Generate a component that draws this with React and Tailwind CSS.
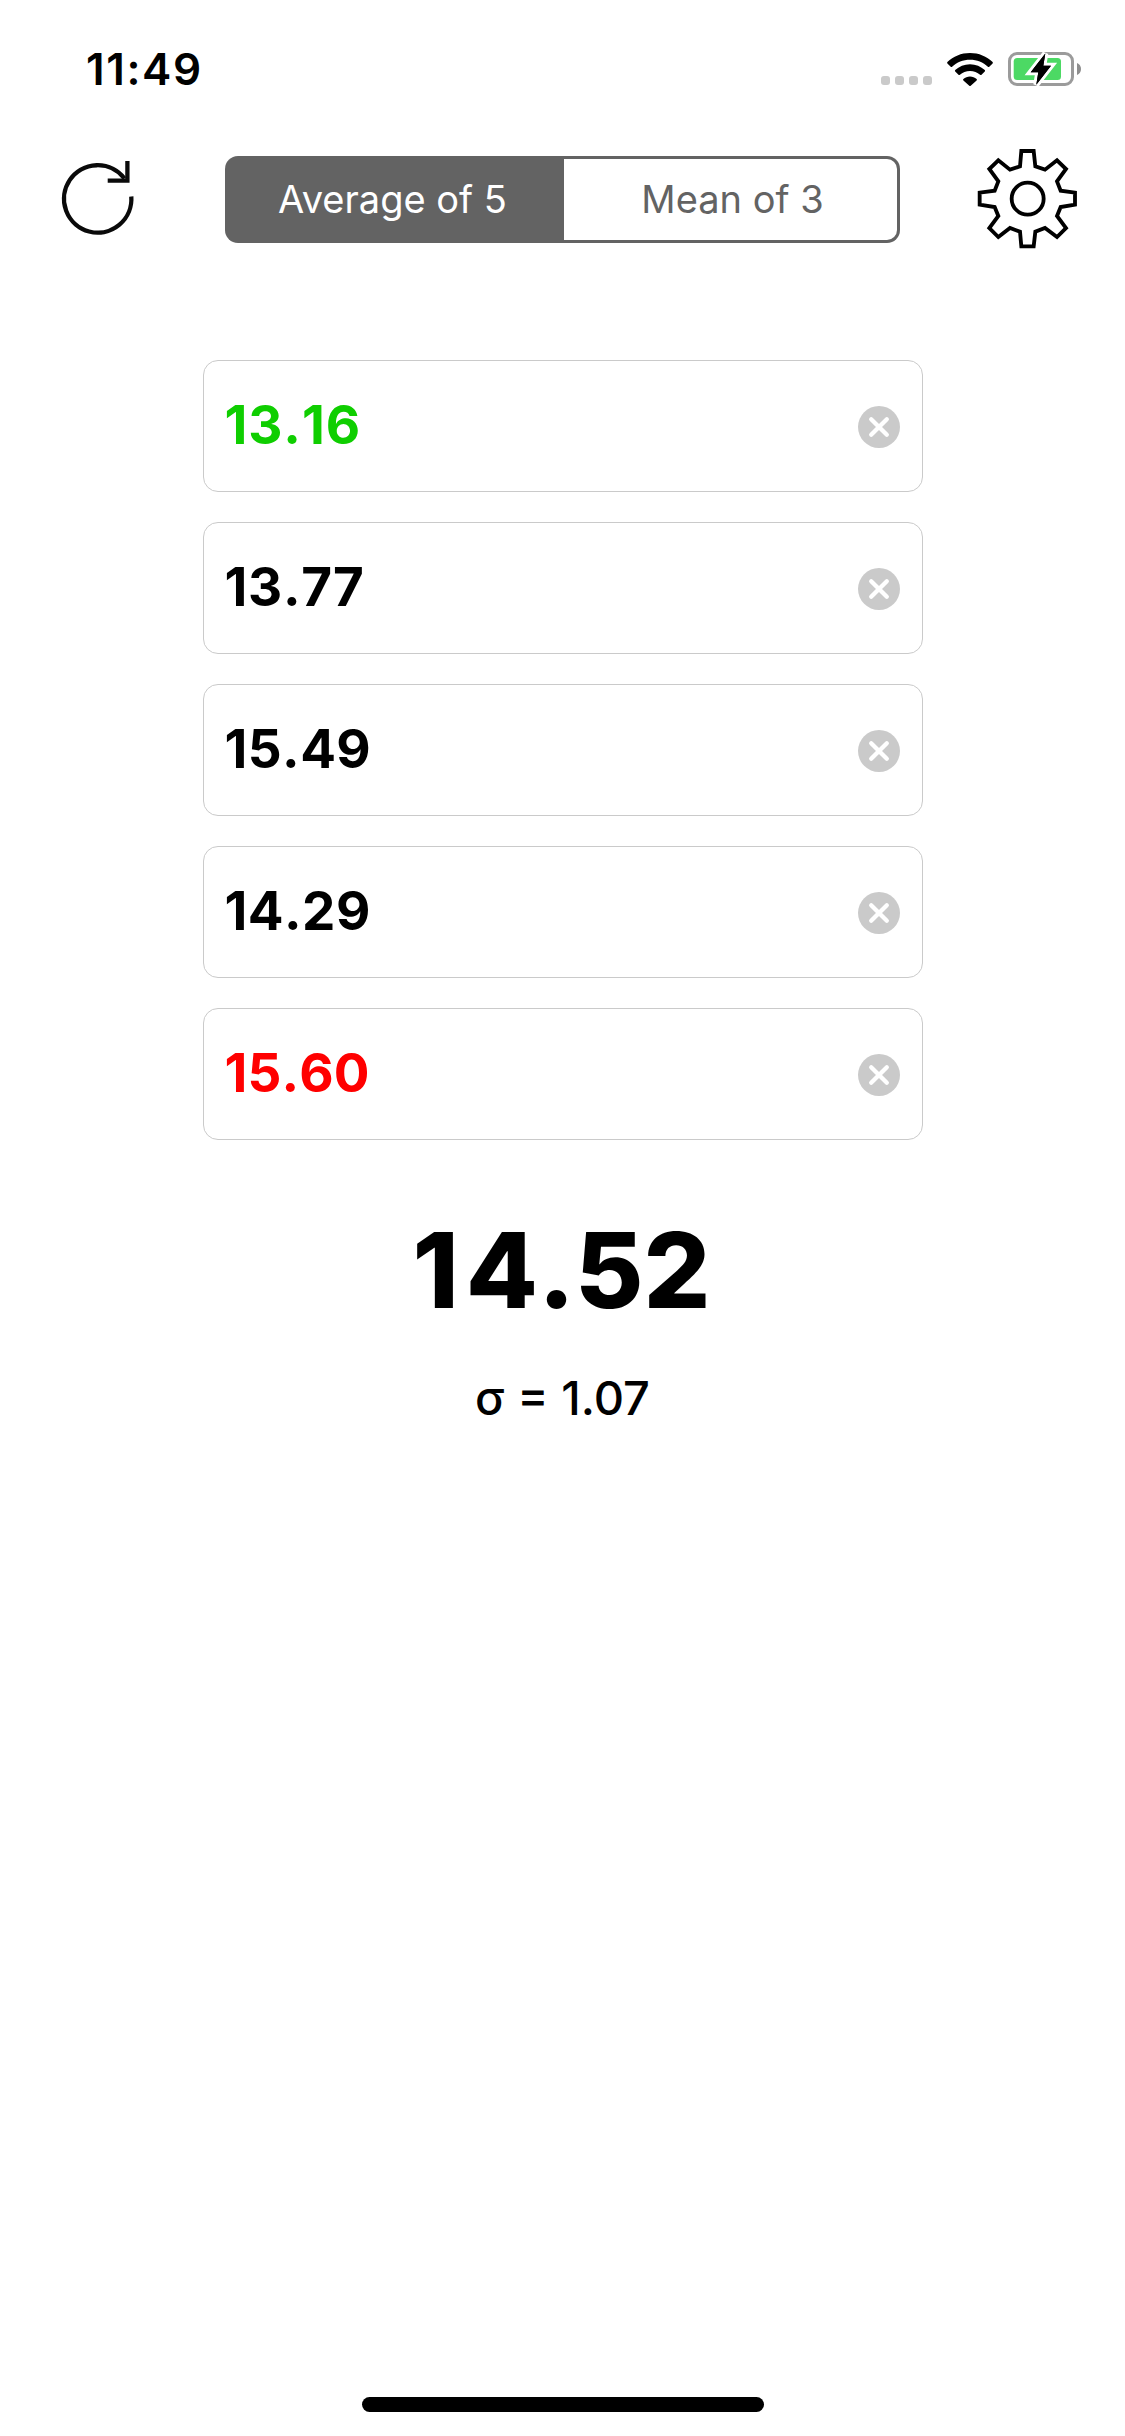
import React from "react";

const solves = [
  { time: "13.16", style: "text-[#0fce00] tracking-[0.9px]" },
  { time: "13.77", style: "text-black tracking-[0.7px]" },
  { time: "15.49", style: "text-black tracking-[0.4px]" },
  { time: "14.29", style: "text-black tracking-[0.4px]" },
  { time: "15.60", style: "text-[#ff0000] tracking-[0.1px]" },
];

function WifiIcon() {
  return (
    <svg className="ml-[57px] h-[33px] w-[46px]" viewBox="0 0 46 33" fill="#000">
      <path d="M23 0C31.800 0 39.800 3.400 45.600 9C46 9.400 46 10 45.600 10.400L42.300 13.700C41.900 14.100 41.300 14.100 40.900 13.700C36.200 9.300 29.900 6.700 23 6.700S9.800 9.300 5.100 13.700C4.700 14.100 4.100 14.100 3.700 13.700L.4 10.400C0 10 0 9.400.4 9C6.200 3.400 14.200 0 23 0Z" />
      <path d="M23 11.200C28.700 11.200 33.900 13.400 37.800 17C38.200 17.400 38.200 18 37.800 18.400L34.500 21.700C34.100 22.100 33.500 22.100 33.100 21.700C30.400 19.300 26.900 17.900 23 17.900S15.600 19.300 12.900 21.700C12.500 22.100 11.900 22.100 11.500 21.700L8.200 18.400C7.800 18 7.800 17.400 8.200 17C12.100 13.400 17.300 11.200 23 11.200Z" />
      <path d="M23 23.500C25.500 23.500 27.800 24.400 29.600 26C30 26.400 30 27 29.600 27.400L23.700 32.700C23.300 33.100 22.700 33.100 22.300 32.700L16.400 27.400C16 27 16 26.400 16.400 26C18.200 24.400 20.500 23.500 23 23.500Z" />
    </svg>
  );
}

function BatteryIcon() {
  return (
    <svg className="ml-[15px] h-[38px] w-[75px]" viewBox="0 0 75 38">
      <rect x="1.500" y="3.500" width="63" height="31" rx="7.500" fill="none" stroke="#9b9b9b" strokeWidth="3" />
      <path d="M69 13C71.500 14 73 16.300 73 19S71.500 24 69 25Z" fill="#8e8e8e" />
      <rect x="5.700" y="8" width="47.300" height="22" rx="3.500" fill="#4cd964" />
      <path d="M37.300 3.500L22.700 22.300H30.300L28.300 34.700L43 15.800H35.300Z" fill="#000" stroke="#fff" strokeWidth="6" paintOrder="stroke" strokeLinejoin="miter" />
      <path d="M37.300 3.500L22.700 22.300H30.300L28.300 34.700L43 15.800H35.300Z" fill="#000" />
    </svg>
  );
}

function RefreshIcon() {
  return (
    <svg className="h-[80px] w-[80px]" viewBox="0 0 80 80" fill="none" stroke="#0a0a0a" strokeWidth="4.300">
      <path d="M73.300 38.500A33.700 33.700 0 1 1 66.500 20.500" />
      <path d="M69.400 3V22.700H49.700" />
    </svg>
  );
}

function GearIcon() {
  return (
    <svg className="h-[100px] w-[100px]" viewBox="51 56 300 300" fill="none" stroke="#000" strokeWidth="11.500">
      <path d="M184 62H221L226 108L255 118L291 90L318 116L291 153L302 181L345 187V223L302 230L291 257L318 293L291 320L255 293L226 304L221 348H184L180 304L150 293L115 320L88 293L115 257L104 230L59 223V187L104 181L115 153L88 116L115 90L150 118L180 108Z" />
      <circle cx="203" cy="205" r="48" />
    </svg>
  );
}

function ClearIcon() {
  return (
    <svg className="mt-[2px] h-[42px] w-[42px]" viewBox="0 0 42 42">
      <circle cx="21" cy="21" r="21" fill="#cacaca" />
      <path d="M13.200 13.200L28.800 28.800M28.800 13.200L13.200 28.800" stroke="#fff" strokeWidth="4.300" strokeLinecap="round" />
    </svg>
  );
}

export default function App() {
  return (
    <div className="flex h-[2436px] w-[1125px] flex-col bg-white font-['Inter',sans-serif] text-black">
      <header className="flex h-[138px] items-start pt-[50px]">
        <div className="ml-[86px] w-[140px] whitespace-nowrap text-[44px] leading-[38px] font-semibold tracking-[1.6px]">11:49</div>
        <div className="ml-[655px] flex h-[38px] items-center">
          <div className="mt-[23px] flex w-[9px] gap-[5px]">
            {[0, 1, 2, 3].map((dot) => (
              <span key={dot} className="size-[9px] shrink-0 rounded-[3px] bg-[#cacaca]" />
            ))}
          </div>
          <WifiIcon />
          <BatteryIcon />
        </div>
      </header>

      <nav className="flex h-[222px] items-start">
        <button className="mt-[20px] ml-[58px]" aria-label="Reset">
          <RefreshIcon />
        </button>
        <div className="mt-[18px] ml-[87px] flex h-[87px] w-[675px] text-[38px]">
          <button className="w-[339px] rounded-l-[13px] bg-[#636363] pr-[4px] whitespace-nowrap text-white">Average of 5</button>
          <button className="flex-1 rounded-r-[13px] border-y-[3px] border-r-[3px] border-[#636363] pl-[4px] whitespace-nowrap text-[#636363]">Mean of 3</button>
        </div>
        <button className="mt-[11px] ml-[77px]" aria-label="Settings">
          <GearIcon />
        </button>
      </nav>

      <main className="flex flex-col items-center">
        <div className="flex flex-col gap-[30px]">
          {solves.map((solve) => (
            <div key={solve.time} className="flex h-[132px] w-[720px] items-center justify-between rounded-[15px] border border-[#cacaca] pr-[22px] pl-[21px]">
              <span className={`pb-[2px] text-[53px] leading-[60px] font-bold [font-kerning:none] ${solve.style}`}>{solve.time}</span>
              <ClearIcon />
            </div>
          ))}
        </div>
        <div className="mt-[70px] pr-[2px] text-[105px] leading-[120px] font-extrabold [font-kerning:none]">
          <span className="tracking-[7px]">1</span>4.52
        </div>
        <div className="mt-[38px] text-[47px] leading-[60px] font-[450]">σ = 1.07</div>
      </main>

      <div className="mt-auto mb-[24px] h-[15px] w-[402px] self-center rounded-full bg-black" />
    </div>
  );
}
